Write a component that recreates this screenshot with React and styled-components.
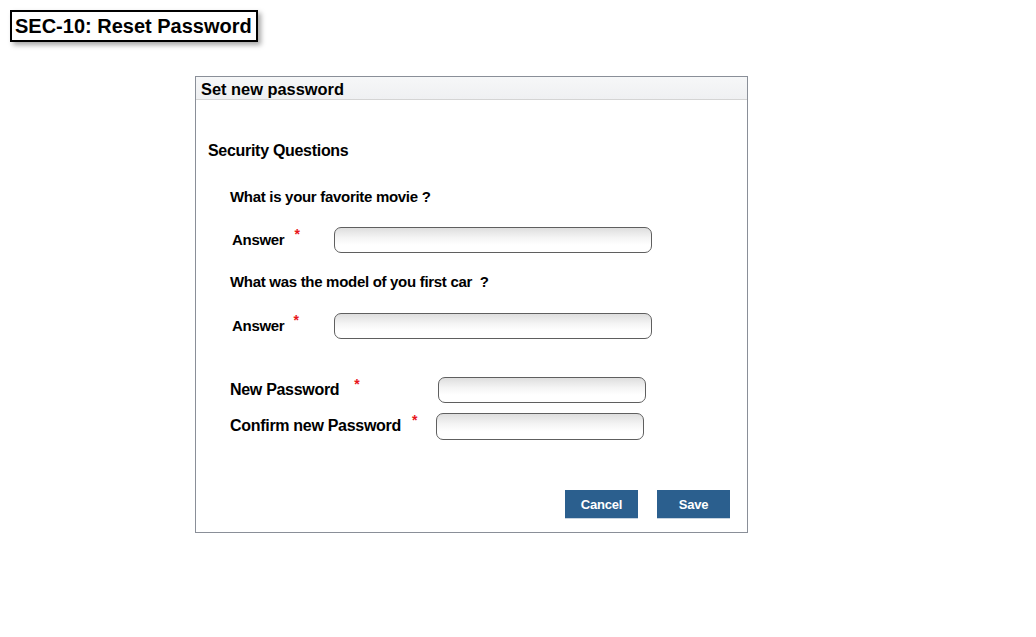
import React from 'react';
import styled, { createGlobalStyle } from 'styled-components';

const GlobalStyle = createGlobalStyle`
  html, body {
    margin: 0;
    padding: 0;
    background: #ffffff;
  }
  body {
    font-family: "Liberation Sans", Arial, sans-serif;
    color: #000;
  }
`;

const Page = styled.div`
  width: 1036px;
  height: 637px;
  padding: 10px;
  box-sizing: border-box;
`;

const TitleBox = styled.div`
  display: inline-block;
  border: 2px solid #000;
  padding: 0 4px 0 3px;
  height: 28px;
  line-height: 28px;
  font-size: 20px;
  font-weight: bold;
  box-shadow: 3px 3px 5px rgba(0, 0, 0, 0.35);
`;

const Panel = styled.div`
  margin: 34px 0 0 185px;
  width: 551px;
  height: 455px;
  border: 1px solid #8a8f98;
  display: flex;
  flex-direction: column;
`;

const PanelHeader = styled.div`
  height: 22px;
  line-height: 24px;
  padding-left: 5px;
  background: linear-gradient(to bottom, #f6f7f8, #eff0f2);
  border-bottom: 1px solid #d4d4d4;
  font-size: 16.4px;
  font-weight: bold;
`;

const PanelBody = styled.div`
  flex: 1;
  display: flex;
  flex-direction: column;
`;

const Heading = styled.div`
  margin: ${p => p.$top}px 0 0 ${p => p.$left}px;
  height: 20px;
  line-height: 20px;
  font-size: ${p => p.$size || 15}px;
  font-weight: bold;
  letter-spacing: -0.3px;
  white-space: pre;
`;

const Row = styled.div`
  display: flex;
  align-items: center;
  margin: ${p => p.$top}px 0 0 ${p => p.$left}px;
  height: ${p => p.$h}px;
`;

const Label = styled.div`
  width: ${p => p.$w}px;
  font-size: ${p => p.$size || 15}px;
  font-weight: bold;
  letter-spacing: -0.3px;
  padding-bottom: 6px;
  white-space: nowrap;
`;

const Star = styled.span`
  color: #e8161b;
  font-size: 14px;
  font-weight: bold;
  letter-spacing: 0;
  vertical-align: 6px;
  margin-left: ${p => p.$gap}px;
`;

const Input = styled.input`
  box-sizing: border-box;
  width: ${p => p.$w}px;
  height: ${p => p.$h}px;
  border: 1.5px solid #5f5f5f;
  border-radius: 7px;
  background: linear-gradient(to bottom, #dedede 0%, #f4f4f4 40%, #ffffff 70%);
  outline: none;
  padding: 0 6px;
  font-family: inherit;
  font-size: 14px;
`;

const Actions = styled.div`
  display: flex;
  justify-content: flex-end;
  gap: 19px;
  margin-top: 50px;
  padding-right: 17px;
`;

const Button = styled.button`
  width: 73px;
  height: 28px;
  border: none;
  background: #2b5f8e;
  color: #ffffff;
  font-family: inherit;
  font-size: 13px;
  font-weight: bold;
  letter-spacing: -0.2px;
  box-shadow: 0 1px 0 #c6d3e0;
  padding: 0;
  cursor: pointer;
`;

export default function App() {
  return (
    <>
      <GlobalStyle />
      <Page>
        <TitleBox>SEC-10: Reset Password</TitleBox>
        <Panel>
          <PanelHeader>Set new password</PanelHeader>
          <PanelBody>
            <Heading $top={41} $left={12} $size={16}>Security Questions</Heading>
            <Heading $top={26} $left={34}>What is your favorite movie ?</Heading>
            <Row $top={20} $left={36} $h={26}>
              <Label $w={102}>
                Answer<Star $gap={10}>*</Star>
              </Label>
              <Input $w={318} $h={26} />
            </Row>
            <Heading $top={19} $left={34}>{'What was the model of you first car  ?'}</Heading>
            <Row $top={21} $left={36} $h={26}>
              <Label $w={102}>
                Answer<Star $gap={9}>*</Star>
              </Label>
              <Input $w={318} $h={26} />
            </Row>
            <Row $top={38} $left={34} $h={26}>
              <Label $w={208} $size={16}>
                New Password<Star $gap={15}>*</Star>
              </Label>
              <Input $w={208} $h={26} />
            </Row>
            <Row $top={10} $left={34} $h={27}>
              <Label $w={206} $size={16}>
                Confirm new Password<Star $gap={11}>*</Star>
              </Label>
              <Input $w={208} $h={27} />
            </Row>
            <Actions>
              <Button>Cancel</Button>
              <Button>Save</Button>
            </Actions>
          </PanelBody>
        </Panel>
      </Page>
    </>
  );
}
